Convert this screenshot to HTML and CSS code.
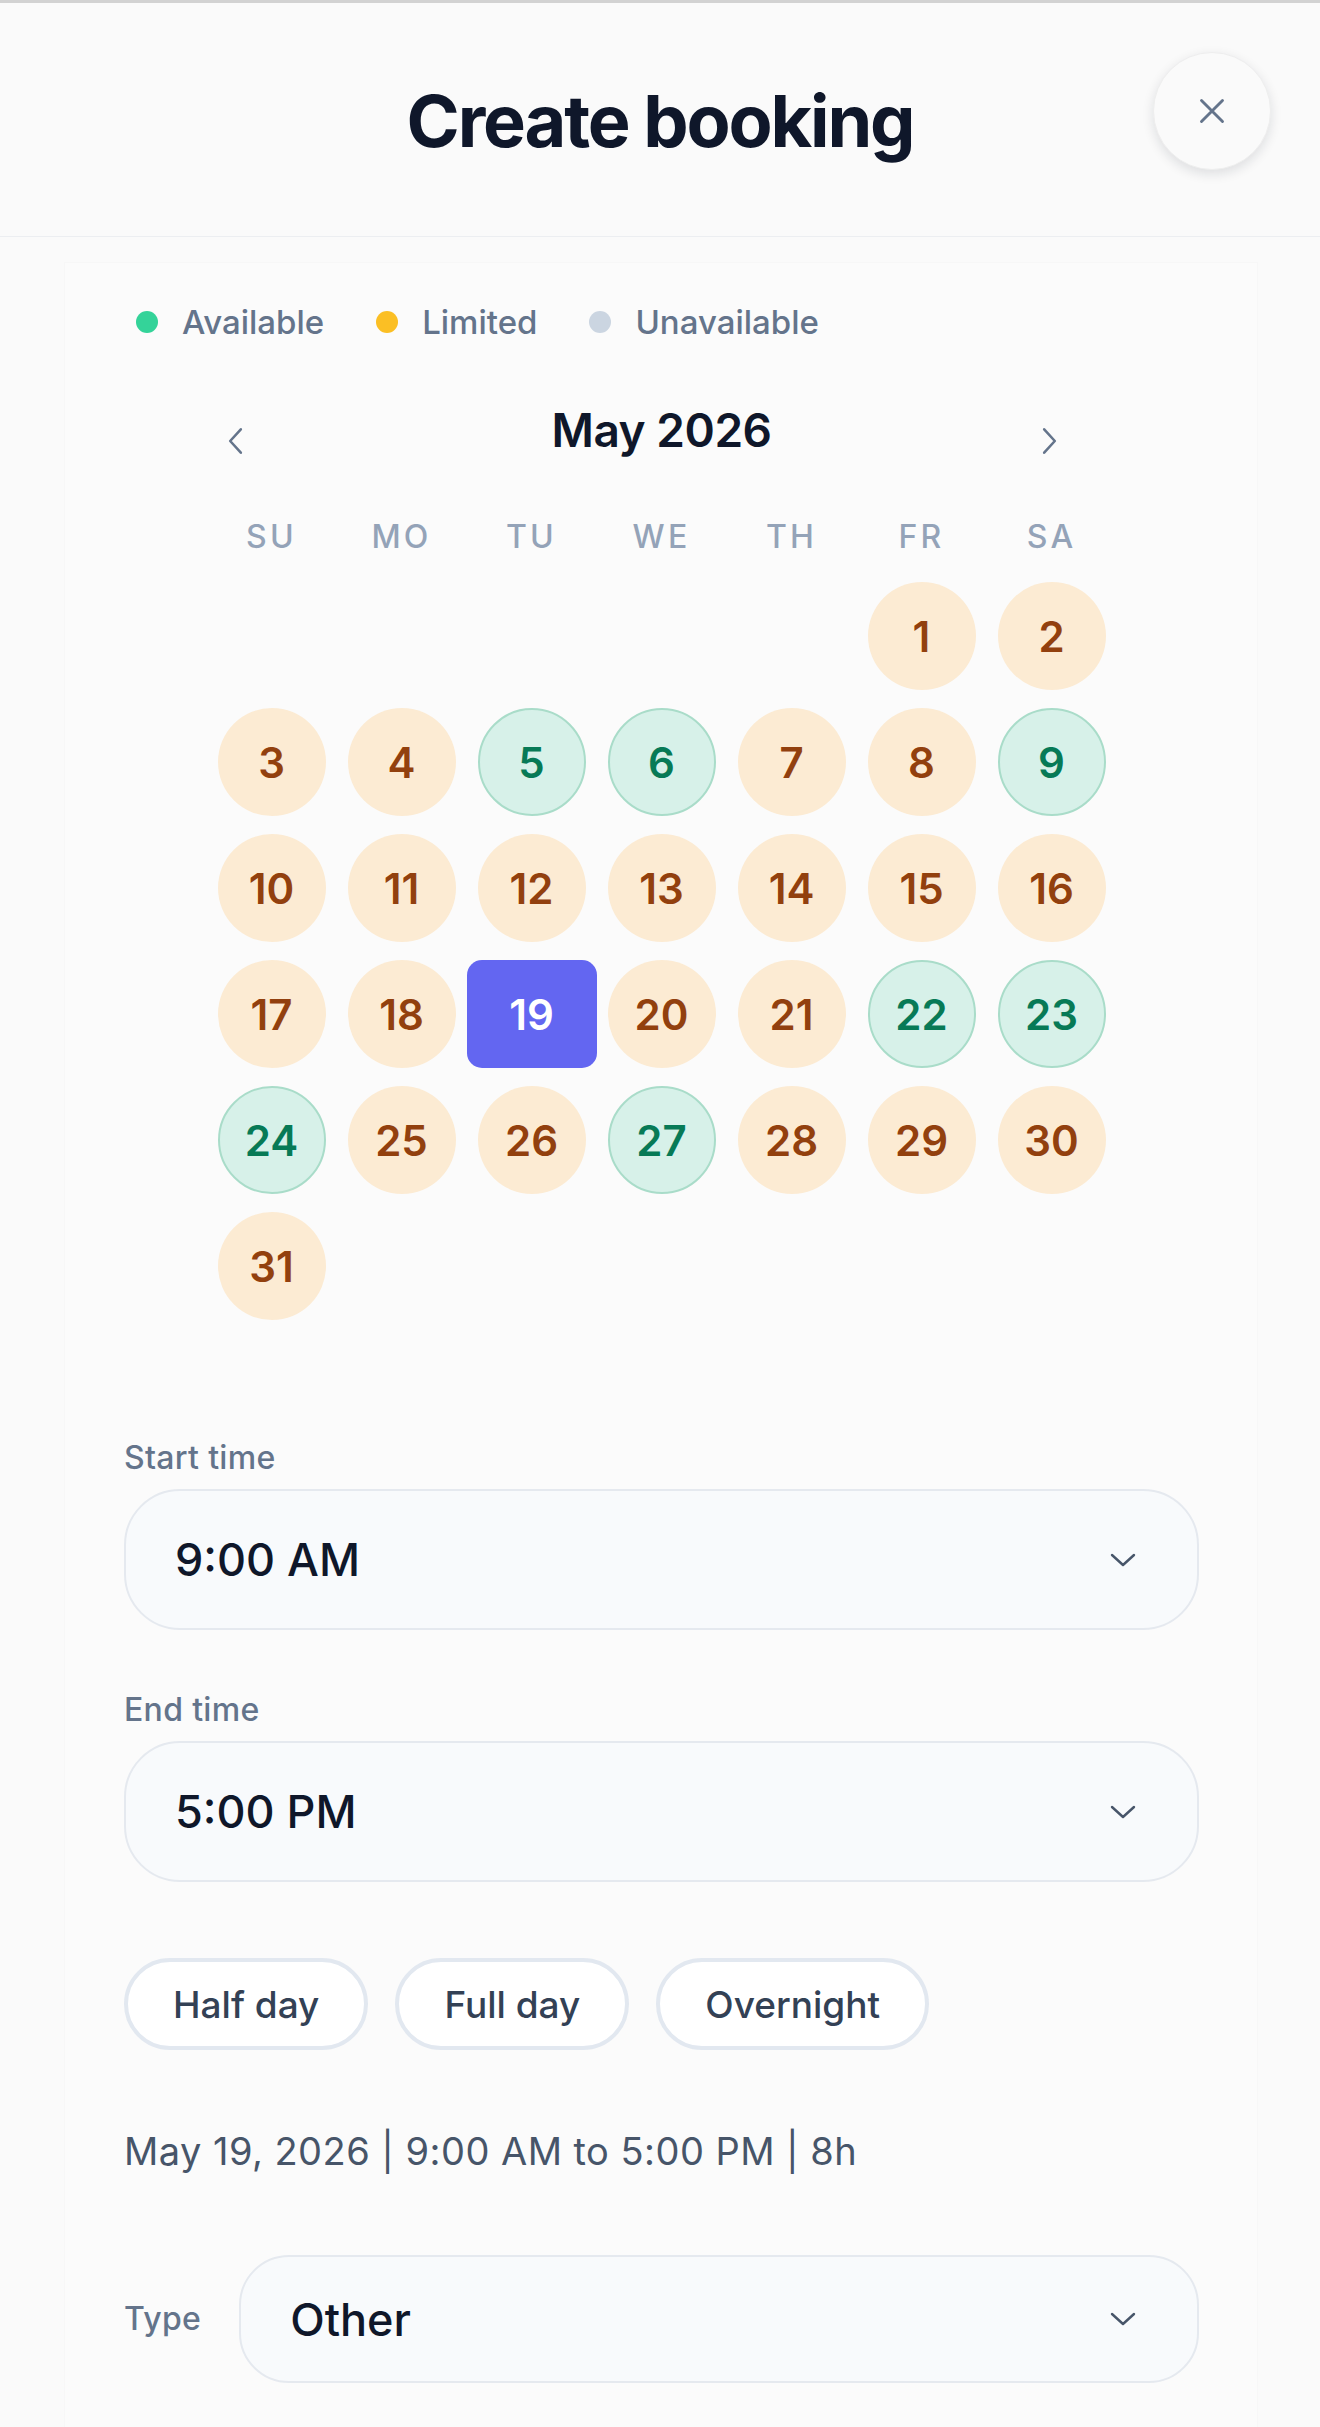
FILE: index.html
```html
<!DOCTYPE html>
<html lang="en">
  <head>
    <meta charset="UTF-8" />
    <meta name="viewport" content="width=device-width, initial-scale=1.0" />
    <title>Create booking</title>
    <link rel="stylesheet" href="styles.css">
  </head>
  <body>
    <header class="sheet-header">
      <div></div>
      <h1>Create booking</h1>
      <button class="close-btn" aria-label="Close">
        <svg viewBox="0 0 24 24" width="36" height="36" fill="none" stroke="currentColor" stroke-width="1.9" stroke-linecap="round">
          <path d="M5 5l14 14M19 5L5 19" />
        </svg>
      </button>
    </header>

    <main class="panel">
      <div class="legend">
        <span class="legend-item"><i class="dot dot-available"></i>Available</span>
        <span class="legend-item"><i class="dot dot-limited"></i>Limited</span>
        <span class="legend-item"><i class="dot dot-unavailable"></i>Unavailable</span>
      </div>

      <div class="calendar">
        <div class="cal-head">
          <button class="nav-btn prev" aria-label="Previous month">
            <svg viewBox="0 0 16 28" width="17" height="30" fill="none" stroke="currentColor" stroke-width="2.4" stroke-linecap="round" stroke-linejoin="round">
              <path d="M13 3L3 14l10 11" />
            </svg>
          </button>
          <h2>May 2026</h2>
          <button class="nav-btn next" aria-label="Next month">
            <svg viewBox="0 0 16 28" width="17" height="30" fill="none" stroke="currentColor" stroke-width="2.4" stroke-linecap="round" stroke-linejoin="round">
              <path d="M3 3l10 11L3 25" />
            </svg>
          </button>
        </div>

        <div class="weekdays">
          <span>SU</span><span>MO</span><span>TU</span><span>WE</span><span>TH</span><span>FR</span><span>SA</span>
        </div>

        <div class="days" id="days"></div>
      </div>

      <div class="field">
        <label>Start time</label>
        <div class="select">
          <span>9:00 AM</span>
          <svg class="chev" viewBox="0 0 28 16" width="28" height="16" fill="none" stroke="currentColor" stroke-width="2.4" stroke-linecap="round" stroke-linejoin="round"><path d="M3 3l11 10L25 3" /></svg>
        </div>
      </div>

      <div class="field field-end">
        <label>End time</label>
        <div class="select">
          <span>5:00 PM</span>
          <svg class="chev" viewBox="0 0 28 16" width="28" height="16" fill="none" stroke="currentColor" stroke-width="2.4" stroke-linecap="round" stroke-linejoin="round"><path d="M3 3l11 10L25 3" /></svg>
        </div>
      </div>

      <div class="presets">
        <button class="chip">Half day</button>
        <button class="chip">Full day</button>
        <button class="chip">Overnight</button>
      </div>

      <p class="summary">May 19, 2026 | 9:00 AM to 5:00 PM | 8h</p>

      <div class="type-row">
        <label>Type</label>
        <div class="select select-type">
          <span>Other</span>
          <svg class="chev" viewBox="0 0 28 16" width="28" height="16" fill="none" stroke="currentColor" stroke-width="2.4" stroke-linecap="round" stroke-linejoin="round"><path d="M3 3l11 10L25 3" /></svg>
        </div>
      </div>
    </main>

    <script>
      // a = available, l = limited
      const status = "llllaallalllllllll.llaaallalllll";
      const firstDay = 5; // May 1 2026 is a Friday
      const selected = 19;
      const daysEl = document.getElementById("days");
      let html = "";
      for (let i = 0; i < firstDay; i++) {
        html += `<span class="day empty"></span>`;
      }
      for (let d = 1; d <= 31; d++) {
        let cls = status[d - 1] === "a" ? "available" : "limited";
        if (d === selected) cls = "selected";
        html += `<span class="day ${cls}"><b>${d}</b></span>`;
      }
      daysEl.innerHTML = html;
    </script>
  </body>
</html>
```

FILE: styles.css
```css
body,
html {
  margin: 0;
  padding: 0;
  background-color: #fafafa;
  font-family: Inter, "Noto Sans", sans-serif;
  color: #0f172a;
}
button {
  font-family: inherit;
}
.sheet-header {
  display: grid;
  grid-template-columns: 1fr auto 1fr;
  align-items: start;
  height: 237px;
  box-sizing: border-box;
  border-top: 3px solid #d2d2d2;
  border-bottom: 1px solid #eceef1;
  padding-top: 49px;
  background-color: #fafafa;
}
.sheet-header h1 {
  margin: 26px 0 0;
  font-size: 72px;
  line-height: 86px;
  font-weight: 700;
  letter-spacing: -0.03em;
  color: #0f172a;
}
.close-btn {
  justify-self: end;
  margin-right: 49px;
  width: 118px;
  height: 118px;
  border-radius: 50%;
  border: 1px solid #eeeeee;
  background-color: #fafafa;
  box-shadow: 0 4px 12px rgba(15, 23, 42, 0.12);
  color: #64748b;
  display: flex;
  align-items: center;
  justify-content: center;
  padding: 0;
  cursor: pointer;
}
.panel {
  margin: 26px 63px 0 65px;
  padding: 39px 58px 44px 59px;
  background-color: #fbfbfb;
  box-shadow: 0 0 0 1px rgba(0, 0, 0, 0.012);
}
.legend {
  display: flex;
  gap: 52px;
  padding-left: 12px;
  font-size: 33px;
  line-height: 40px;
  font-weight: 500;
  color: #64748b;
}
.legend-item {
  display: flex;
  align-items: center;
  gap: 24px;
}
.dot {
  width: 22px;
  height: 22px;
  border-radius: 50%;
}
.dot-available {
  background-color: #34d399;
}
.dot-limited {
  background-color: #fbbf24;
}
.dot-unavailable {
  background-color: #cbd5e1;
}
.calendar {
  width: 910px;
  margin: 61px auto 0;
}
.cal-head {
  display: grid;
  grid-template-columns: 1fr auto 1fr;
  align-items: center;
}
.cal-head h2 {
  margin: 0;
  font-size: 46px;
  line-height: 54px;
  font-weight: 600;
  letter-spacing: -0.01em;
}
.nav-btn {
  background: none;
  border: none;
  padding: 0;
  color: #64748b;
  margin-top: 22px;
  display: flex;
  cursor: pointer;
}
.nav-btn.prev {
  justify-self: start;
  margin-left: 20px;
}
.nav-btn.next {
  justify-self: end;
  margin-right: 59px;
}
.weekdays {
  display: grid;
  grid-template-columns: repeat(7, 1fr);
  margin-top: 60px;
  text-align: center;
  font-size: 32px;
  line-height: 40px;
  font-weight: 500;
  letter-spacing: 0.1em;
  color: #94a3b8;
}
.days {
  display: grid;
  grid-template-columns: repeat(7, 1fr);
  grid-auto-rows: 108px;
  row-gap: 18px;
  margin-top: 25px;
}
.day {
  display: flex;
  align-items: center;
  justify-content: center;
}
.day b {
  width: 108px;
  height: 108px;
  box-sizing: border-box;
  border-radius: 50%;
  display: flex;
  align-items: center;
  justify-content: center;
  font-size: 42px;
  font-weight: 600;
}
.limited b {
  background-color: #fcebd3;
  color: #92400e;
}
.available b {
  background-color: #d7f1e9;
  border: 2px solid #a9dcc9;
  color: #077a56;
}
.selected b {
  width: 130px;
  border-radius: 15px;
  background-color: #6366f1;
  color: #ffffff;
}
.field {
  margin-top: 120px;
}
.field-end {
  margin-top: 62px;
}
.field label,
.type-row label {
  display: block;
  font-size: 32px;
  line-height: 36px;
  font-weight: 500;
  color: #64748b;
  letter-spacing: 0.01em;
}
.select {
  margin-top: 13px;
  height: 141px;
  box-sizing: border-box;
  border: 2px solid #e5e9ef;
  border-radius: 56px;
  background-color: #f8fafc;
  display: flex;
  align-items: center;
  justify-content: space-between;
  padding: 0 60px 0 49px;
  font-size: 45px;
  font-weight: 500;
  color: #0f172a;
}
.chev {
  color: #475569;
}
.presets {
  display: flex;
  gap: 27px;
  margin-top: 76px;
}
.chip {
  height: 92px;
  padding: 0 45px;
  border: 4px solid #e2e8f0;
  border-radius: 46px;
  background-color: #ffffff;
  font-size: 37px;
  font-weight: 500;
  color: #334155;
  cursor: pointer;
}
.summary {
  margin: 79px 0 0;
  font-size: 38px;
  line-height: 44px;
  color: #475569;
  letter-spacing: 0.012em;
}
.type-row {
  display: flex;
  align-items: center;
  gap: 38px;
  margin-top: 82px;
}
.select-type {
  flex: 1;
  margin-top: 0;
  height: 128px;
  border-radius: 50px;
}
```
